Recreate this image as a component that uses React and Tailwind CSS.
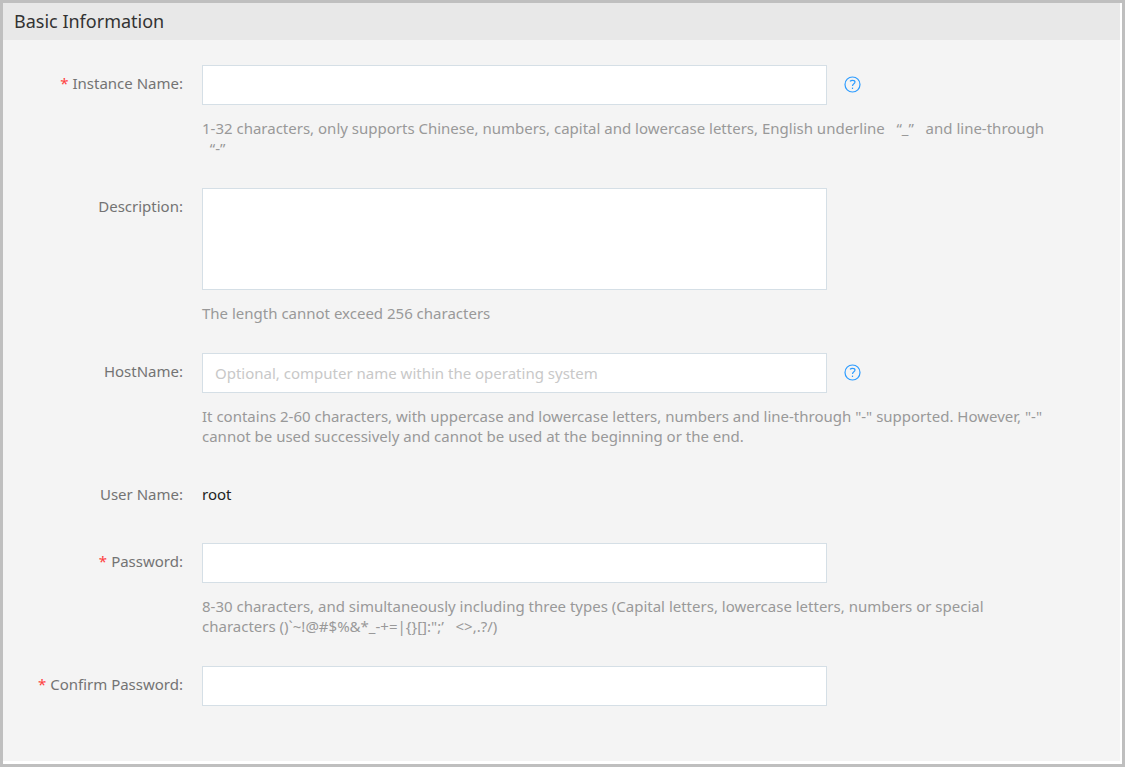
import React from "react";

const fieldClass =
  "block w-full max-w-[625px] border border-[#d5dfe6] bg-white px-3 text-[#333] outline-none placeholder:text-[#c8c8c8] placeholder:opacity-100 focus:border-[#2d9cff]";

function LabelText({ required, children }) {
  return (
    <>
      {required && <span className="mr-1 text-[#ff4040]">*</span>}
      {children}
    </>
  );
}

function Row({ id, label, required, help, children }) {
  return (
    <div className="flex">
      <div className="w-[180px] shrink-0 pt-2 text-right leading-5 text-[#737373]">
        {id ? (
          <label htmlFor={id}>
            <LabelText required={required}>{label}</LabelText>
          </label>
        ) : (
          <LabelText required={required}>{label}</LabelText>
        )}
      </div>
      <div className="ml-[19px] min-w-0 flex-1">
        {children}
        {help && <p className="mt-[13px] leading-5 text-[#999]">{help}</p>}
      </div>
    </div>
  );
}

function HelpButton({ label }) {
  return (
    <button type="button" aria-label={label} className="shrink-0 pb-0.5 text-[#2d9cff]">
      <svg className="size-[17px]" viewBox="0 0 17 17" fill="none" stroke="currentColor" strokeWidth="1.2">
        <circle cx="8.5" cy="8.5" r="7.5" />
        <path d="M6 5.4C6.6 4.7 7.5 4.3 8.5 4.3C10 4.3 11 5 11 6.1C11 7 10.4 7.5 9.6 8C8.8 8.6 8.5 9 8.5 10.1" />
        <path d="M8.5 11.6V13" />
      </svg>
    </button>
  );
}

export default function App() {
  return (
    <main className="min-h-screen border-[3px] border-[#bfbfbf] bg-white pr-0.5 pb-[3px] font-['Noto_Sans','Noto_Sans_CJK_SC',sans-serif] text-[15px]">
      <section className="bg-[#f4f4f4]">
        <h1 className="bg-[#e8e8e8] px-[11px] py-1 text-lg leading-[29px] text-[#333]">Basic Information</h1>
        <form className="flex flex-col gap-[30px] pt-[25px] pr-[50px] pb-[55px]">
          <Row
            id="instance"
            label="Instance Name:"
            required
            help={
              "1-32 characters, only supports Chinese, numbers, capital and lowercase letters, English underline \u00a0\u00a0“_” \u00a0\u00a0and line-through \u00a0\u00a0“-”"
            }
          >
            <div className="flex items-center gap-[17px]">
              <input id="instance" type="text" className={`${fieldClass} h-10`} />
              <HelpButton label="Instance name help" />
            </div>
          </Row>
          <Row id="description" label="Description:" help="The length cannot exceed 256 characters">
            <textarea id="description" className={`${fieldClass} h-[102px] resize-none py-2`} />
          </Row>
          <Row
            id="host"
            label="HostName:"
            help={
              'It contains 2-60 characters, with uppercase and lowercase letters, numbers and line-through "-" supported. However, "-" cannot be used successively and cannot be used at the beginning or the end.'
            }
          >
            <div className="flex items-center gap-[17px]">
              <input
                id="host"
                type="text"
                placeholder="Optional, computer name within the operating system"
                className={`${fieldClass} h-10`}
              />
              <HelpButton label="Host name help" />
            </div>
          </Row>
          <Row label="User Name:">
            <p className="pt-2 pb-[9px] leading-5 text-[#222]">root</p>
          </Row>
          <Row
            id="password"
            label="Password:"
            required
            help={
              "8-30 characters, and simultaneously including three types (Capital letters, lowercase letters, numbers or special characters\u00a0()`~!@#$%&*_-+=|{}[]:\";’\u00a0\u00a0\u00a0<>,.?/)"
            }
          >
            <input id="password" type="password" className={`${fieldClass} h-10`} />
          </Row>
          <Row id="confirm" label="Confirm Password:" required>
            <input id="confirm" type="password" className={`${fieldClass} h-10`} />
          </Row>
        </form>
      </section>
    </main>
  );
}
